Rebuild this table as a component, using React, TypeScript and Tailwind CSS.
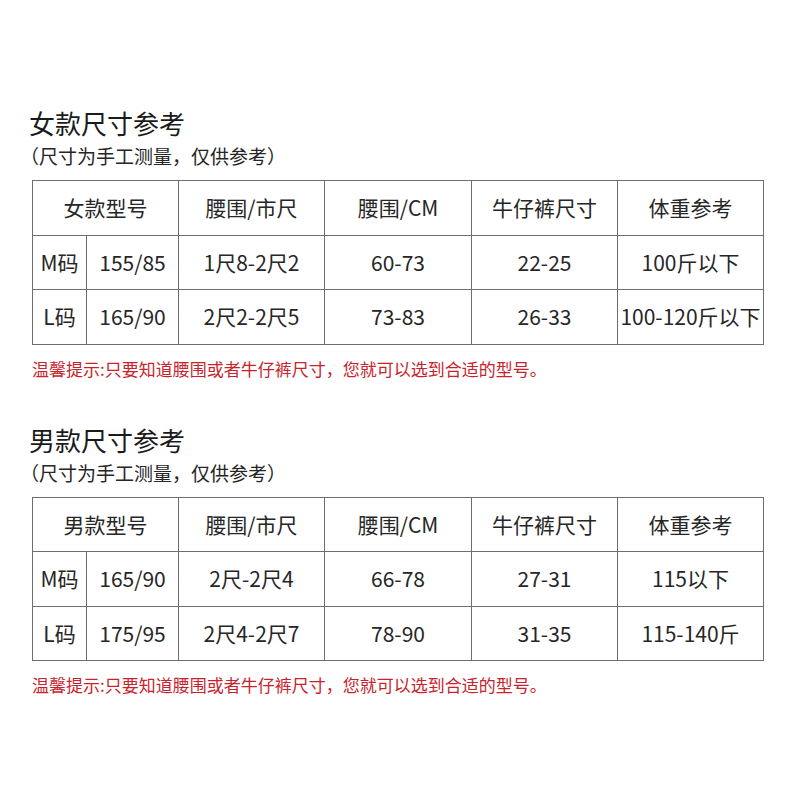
const font = { fontFamily: '"Noto Sans CJK SC", "Noto Sans", sans-serif' };

type Row = [string, string, string, string, string, string];

const sections: { title: string; model: string; rows: Row[] }[] = [
  {
    title: "女款尺寸参考",
    model: "女款型号",
    rows: [
      ["M码", "155/85", "1尺8-2尺2", "60-73", "22-25", "100斤以下"],
      ["L码", "165/90", "2尺2-2尺5", "73-83", "26-33", "100-120斤以下"],
    ],
  },
  {
    title: "男款尺寸参考",
    model: "男款型号",
    rows: [
      ["M码", "165/90", "2尺-2尺4", "66-78", "27-31", "115以下"],
      ["L码", "175/95", "2尺4-2尺7", "78-90", "31-35", "115-140斤"],
    ],
  },
];

const cell = "border-[1.5px] border-[#6e6e6e] h-[54.5px] p-0 text-center align-middle whitespace-nowrap";

const SizeTable = ({ model, rows }: { model: string; rows: Row[] }) => (
  <table className="border-collapse table-fixed w-[731px] text-[21px] text-[#262626] leading-none">
    <colgroup>
      <col className="w-[54px]" />
      <col className="w-[92px]" />
      <col className="w-[146px]" />
      <col className="w-[147px]" />
      <col className="w-[146px]" />
      <col className="w-[146px]" />
    </colgroup>
    <tbody>
      <tr>
        <td colSpan={2} className={cell}>{model}</td>
        <td className={cell}>腰围/市尺</td>
        <td className={cell}>腰围/CM</td>
        <td className={cell}>牛仔裤尺寸</td>
        <td className={cell}>体重参考</td>
      </tr>
      {rows.map((r) => (
        <tr key={r[0]}>
          {r.map((v, i) => (
            <td key={i} className={cell}>{v}</td>
          ))}
        </tr>
      ))}
    </tbody>
  </table>
);

export default function App() {
  return (
    <div className="w-[800px] h-[800px] bg-white pt-[106px]" style={font}>
      {sections.map((s, idx) => (
        <section key={s.title} className={idx === 0 ? "" : "mt-[42px]"}>
          <h2 className="pl-[29px] text-[26px] leading-[34px] text-[#1a1a1a] font-normal">{s.title}</h2>
          <p className="pl-[20px] mt-[4px] text-[19px] leading-[24px] text-[#262626]">（尺寸为手工测量，仅供参考）</p>
          <div className="pl-[32px] mt-[12px]">
            <SizeTable model={s.model} rows={s.rows} />
          </div>
          <p className="pl-[32px] mt-[12px] text-[17px] leading-[24px] text-[#c8232c]">
            温馨提示:只要知道腰围或者牛仔裤尺寸，您就可以选到合适的型号。
          </p>
        </section>
      ))}
    </div>
  );
}
